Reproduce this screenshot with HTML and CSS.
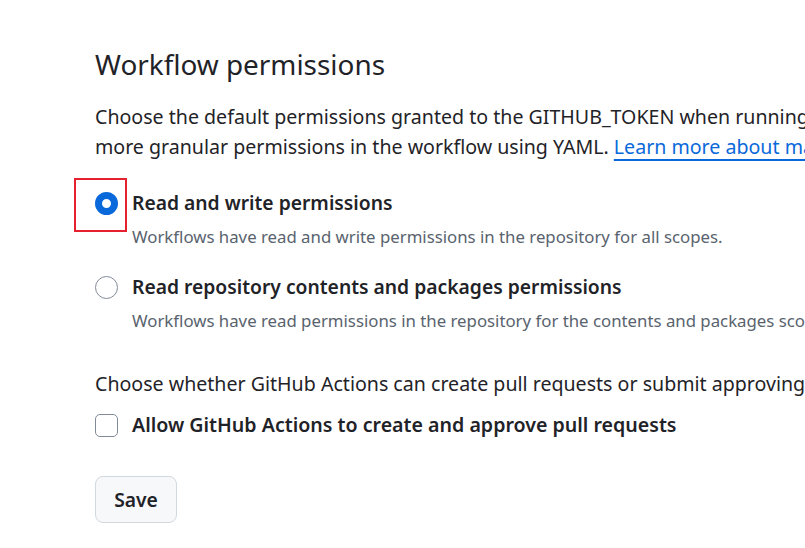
FILE: index.html
```html
<!DOCTYPE html>
<html lang="en">
<head>
<meta charset="utf-8">
<link rel="stylesheet" href="styles.css">
</head>
<body>
<main class="page">
  <h2 class="title">Workflow permissions</h2>
  <p class="lead">Choose the default permissions granted to the GITHUB_TOKEN when running workflows in this repository. You can specify<br>more granular permissions in the workflow using YAML. <a href="#" class="link">Learn more about managing permissions</a></p>

  <div class="options">
    <label class="option">
      <span class="radio-wrap"><span class="radio checked"></span><span class="focus-box"></span></span>
      <span class="option-text">
        <span class="option-label">Read and write permissions</span>
        <span class="option-note">Workflows have read and write permissions in the repository for all scopes.</span>
      </span>
    </label>
    <label class="option">
      <span class="radio-wrap"><span class="radio"></span></span>
      <span class="option-text">
        <span class="option-label">Read repository contents and packages permissions</span>
        <span class="option-note">Workflows have read permissions in the repository for the contents and packages scopes only.</span>
      </span>
    </label>
  </div>

  <p class="lead second">Choose whether GitHub Actions can create pull requests or submit approving pull request reviews.</p>
  <label class="check-row">
    <span class="checkbox"></span>
    <span class="option-label check-label">Allow GitHub Actions to create and approve pull requests</span>
  </label>

  <div class="actions">
    <button class="btn" type="button">Save</button>
  </div>
</main>
</body>
</html>
```
FILE: styles.css
```css
html, body {
  margin: 0;
  padding: 0;
  background: #ffffff;
  overflow: hidden;
}
body {
  width: 805px;
  height: 548px;
  font-family: "Noto Sans", "Open Sans", "Liberation Sans", sans-serif;
  color: #1f2328;
}
.page {
  padding: 44px 0 0 95px;
  display: flex;
  flex-direction: column;
  white-space: nowrap;
}
.title {
  margin: 0;
  font-size: 27.9px;
  font-weight: 400;
  line-height: 40px;
}
.lead {
  margin: 18px 0 0;
  font-size: 19.6px;
  line-height: 30px;
}
.link {
  color: #0969da;
  text-decoration: underline;
  text-underline-offset: 5px;
  text-decoration-thickness: 2px;
}
.options {
  display: flex;
  flex-direction: column;
  gap: 21px;
  margin-top: 25px;
}
.option {
  display: flex;
  align-items: flex-start;
  gap: 14px;
}
.radio-wrap {
  position: relative;
  flex-shrink: 0;
  width: 23px;
  height: 23px;
  margin-top: 5px;
}
.radio {
  display: block;
  width: 23px;
  height: 23px;
  border-radius: 50%;
  border: 1px solid #818b98;
  box-sizing: border-box;
  background: #fff;
}
.radio.checked {
  border: 7px solid #0969da;
}
.focus-box {
  position: absolute;
  left: -21px;
  top: -14px;
  width: 53px;
  height: 54px;
  border: 2px solid #e5202f;
  box-sizing: border-box;
}
.option-text {
  display: flex;
  flex-direction: column;
}
.option-label {
  font-size: 19.3px;
  font-weight: 600;
  line-height: 32px;
}
.check-label {
  font-size: 19.6px;
}
.option-note {
  font-size: 16.8px;
  line-height: 26px;
  color: #59636e;
  margin-top: 5px;
}
.second {
  margin-top: 35px;
}
.check-row {
  display: flex;
  align-items: center;
  gap: 14px;
  margin-top: 10px;
}
.checkbox {
  flex-shrink: 0;
  width: 23px;
  height: 23px;
  border: 1px solid #818b98;
  border-radius: 5px;
  box-sizing: border-box;
}
.actions {
  margin-top: 35px;
}
.btn {
  font-family: inherit;
  font-size: 19.3px;
  font-weight: 600;
  color: #1f2328;
  background: #f6f8fa;
  border: 1px solid #d1d9e0;
  border-radius: 8px;
  width: 82px;
  height: 47px;
  padding: 0;
}
```
